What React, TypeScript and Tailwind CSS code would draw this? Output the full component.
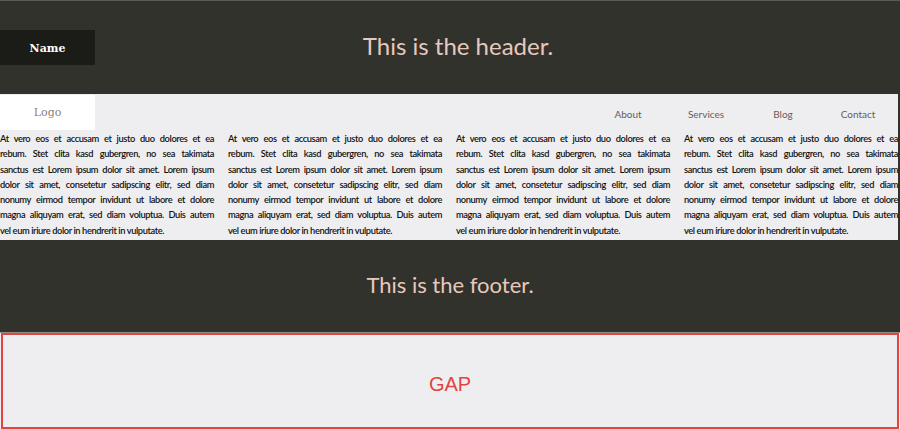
const lines = [
  "At vero eos et accusam et justo duo dolores et ea",
  "rebum. Stet clita kasd gubergren, no sea takimata",
  "sanctus est Lorem ipsum dolor sit amet. Lorem ipsum",
  "dolor sit amet, consetetur sadipscing elitr, sed diam",
  "nonumy eirmod tempor invidunt ut labore et dolore",
  "magna aliquyam erat, sed diam voluptua. Duis autem",
  "vel eum iriure dolor in hendrerit in vulputate.",
];

const links = [
  { label: "About", w: "w-[72px]" },
  { label: "Services", w: "w-[84px]" },
  { label: "Blog", w: "w-[70px]" },
  { label: "Contact", w: "w-[80px]" },
];

function Column() {
  return (
    <div className="text-[9.3px] leading-[15.3px] font-semibold text-[#111] tracking-[-0.4px]">
      {lines.map((line, i) => (
        <div
          key={i}
          className={i < lines.length - 1 ? "text-justify [text-align-last:justify]" : "text-left"}
        >
          {line}
        </div>
      ))}
    </div>
  );
}

export default function App() {
  return (
    <div className="w-[900px] h-[429px] bg-[#eeeef0] overflow-hidden font-['Lato',sans-serif]">
      {/* header */}
      <header className="h-[94px] bg-[#30322b] border-t border-[#5a5b57] flex items-center">
        <div className="w-[95px] h-[35px] bg-[#1b1b17] flex items-center justify-center text-white text-[11px] font-bold font-['DejaVu_Serif',serif] pt-[3px]">
          Name
        </div>
        <h1 className="flex-1 text-center pr-[79px] text-[24px] text-[#e8c8bd] mt-[-4px]">
          This is the header.
        </h1>
      </header>

      {/* nav */}
      <nav className="h-[36px] flex items-center border-r-2 border-[#30322b]">
        <div className="w-[95px] h-[35px] bg-white flex items-center justify-center text-[11px] text-[#8a7f7b] font-['DejaVu_Serif',serif] pt-[2px]">
          Logo
        </div>
        <div className="ml-auto flex items-center text-[10px] text-[#675c58] pt-[4px]">
          {links.map((l) => (
            <span key={l.label} className={`${l.w} text-center`}>
              {l.label}
            </span>
          ))}
        </div>
      </nav>

      {/* content */}
      <main className="h-[110px] grid grid-cols-4 gap-x-[14px] pt-[1px] border-r-2 border-[#30322b]">
        <Column />
        <Column />
        <Column />
        <Column />
      </main>

      {/* footer */}
      <footer className="h-[93px] bg-[#30322b] border-b border-[#8d8e88] flex items-center justify-center">
        <p className="text-[22px] text-[#e8c8bd] mt-[-4px]">This is the footer.</p>
      </footer>

      {/* gap */}
      <div className="h-[96px] mx-[1px] border-2 border-[#e0463f] flex items-center justify-center">
        <span className="text-[20px] text-[#e0463f] font-['Liberation_Sans',sans-serif] mt-[6px]">GAP</span>
      </div>
    </div>
  );
}
